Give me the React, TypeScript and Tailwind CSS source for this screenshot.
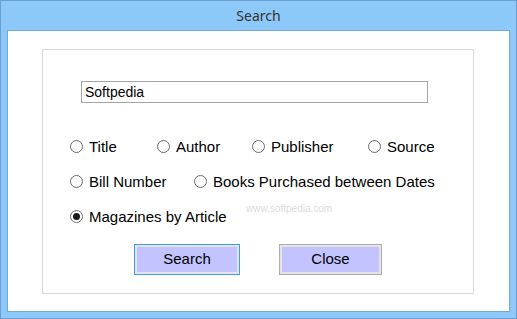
import React, { useState } from "react";

type Opt = { label: string; w: string };

const rows: Opt[][] = [
  [
    { label: "Title", w: "w-[87px]" },
    { label: "Author", w: "w-[95px]" },
    { label: "Publisher", w: "w-[116px]" },
    { label: "Source", w: "w-auto" },
  ],
  [
    { label: "Bill Number", w: "w-[124px]" },
    { label: "Books Purchased between Dates", w: "w-auto" },
  ],
  [{ label: "Magazines by Article", w: "w-auto" }],
];

const Radio: React.FC<{ checked: boolean; label: string; w: string; onPick: () => void }> = ({
  checked,
  label,
  w,
  onPick,
}) => (
  <button type="button" onClick={onPick} className={`flex items-center ${w} h-[20px]`}>
    <span className="flex h-[13px] w-[13px] items-center justify-center rounded-full border border-[#6d6d6d] bg-white">
      {checked && <span className="h-[7px] w-[7px] rounded-full bg-[#1a1a1a]" />}
    </span>
    <span className="ml-[6px] text-[15px] leading-none text-black">{label}</span>
  </button>
);

const App: React.FC = () => {
  const [query, setQuery] = useState("Softpedia");
  const [picked, setPicked] = useState("Magazines by Article");

  return (
    <div
      className="h-[319px] w-[517px] border border-[#6b9fd1] bg-[#8cc8f8]"
      style={{ fontFamily: '"Liberation Sans", Arial, sans-serif' }}
    >
      {/* Title bar */}
      <div
        className="flex h-[29px] items-center justify-center text-[14px] text-[#333]"
        style={{ fontFamily: '"Segoe UI", "Noto Sans", sans-serif' }}
      >
        Search
      </div>

      {/* Client area */}
      <div className="relative ml-[6px] h-[282px] w-[503px] border border-[#74a9dc] bg-white pl-[34px] pt-[18px]">
        <div className="h-[245px] w-[432px] border border-[#d9d9d9] pl-[27px] pt-[31px]">
          <input
            value={query}
            onChange={(e) => setQuery(e.target.value)}
            className="ml-[11px] block h-[22px] w-[347px] border border-[#a5a5a5] px-[3px] text-[14px] text-black outline-none"
          />

          <div className="mt-[33px] flex flex-col gap-[15px]">
            {rows.map((row, i) => (
              <div key={i} className="flex">
                {row.map((o) => (
                  <Radio
                    key={o.label}
                    label={o.label}
                    w={o.w}
                    checked={picked === o.label}
                    onPick={() => setPicked(o.label)}
                  />
                ))}
              </div>
            ))}
          </div>

          <div className="ml-[64px] mt-[18px] flex gap-[39px]">
            <button
              type="button"
              className="h-[31px] w-[106px] border border-[#3d9bf0] bg-[#c3c3ff] text-[15px] text-black outline outline-2 -outline-offset-3 outline-[#e4e4e4]"
            >
              Search
            </button>
            <button
              type="button"
              className="h-[31px] w-[103px] border border-[#adadad] bg-[#c3c3ff] text-[15px] text-black outline outline-2 -outline-offset-3 outline-[#e4e4e4]"
            >
              Close
            </button>
          </div>
        </div>

        {/* watermark */}
        <span className="pointer-events-none absolute left-[238px] top-[170px] text-[10px] text-[#dcdcdc]">
          www.softpedia.com
        </span>
      </div>
    </div>
  );
};

export default App;
